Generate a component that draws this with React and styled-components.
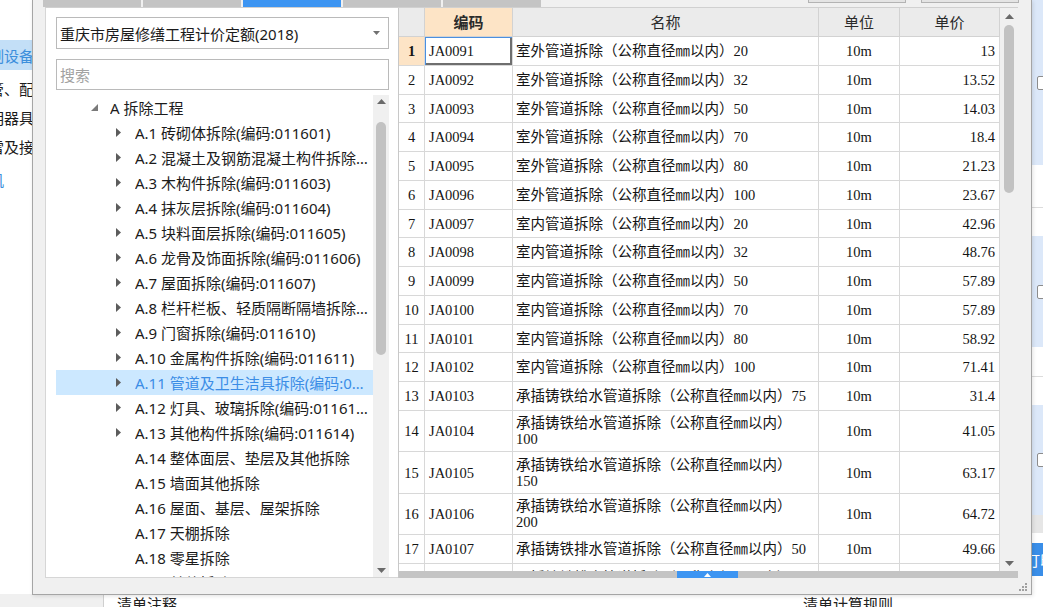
import React from "react";
import styled, { createGlobalStyle } from "styled-components";

const GlobalStyle = createGlobalStyle`
  * { box-sizing: border-box; }
  html, body {
    margin: 0;
    width: 1043px;
    height: 607px;
    overflow: hidden;
    background: #fff;
  }
  body {
    font-family: "Noto Sans", "Noto Sans CJK SC", sans-serif;
    color: #1b1b1b;
  }
`;

const Screen = styled.div`
  position: relative;
  display: flex;
  width: 1043px;
  height: 607px;
  overflow: hidden;
`;

/* ---------- app behind the dialog ---------- */

const Nav = styled.div`
  flex: none;
  width: 130px;
  margin-left: -26px;
  display: flex;
  flex-direction: column;
  border-right: 1px solid #cfcfcf;
  font-size: 15px;
`;

const NavList = styled.div`
  flex: 1;
  padding-top: 40px;
  background: #fff;
`;

const NavItem = styled.div`
  height: ${(p) => (p.$active ? 30 : 29)}px;
  margin-bottom: ${(p) => (p.$active ? 4 : 0)}px;
  margin-top: ${(p) => (p.$link ? 4 : 0)}px;
  padding-left: ${(p) => (p.$link ? 15 : 0)}px;
  display: flex;
  align-items: center;
  white-space: nowrap;
  overflow: hidden;
  background: ${(p) => (p.$active ? "#c3dff7" : "transparent")};
  color: ${(p) => (p.$active || p.$link ? "#3d8fdc" : "#1b1b1b")};
`;

const NavFoot = styled.div`
  height: 13px;
  background: #f0f0f0;
`;

const Main = styled.div`
  flex: 1;
  display: flex;
  flex-direction: column;
  justify-content: flex-end;
  background: #fff;
`;

const FieldRow = styled.div`
  height: 13px;
  display: flex;
  padding-left: 13px;
  font-size: 15px;
  line-height: 20px;
  overflow: hidden;
  color: #202020;
`;

const FieldLabel = styled.div`
  flex: none;
  width: ${(p) => (p.$w ? `${p.$w}px` : "auto")};
  white-space: nowrap;
`;

const Side = styled.div`
  flex: none;
  width: 11px;
  overflow: hidden;
  display: flex;
  flex-direction: column;
  background: #fff;
`;

const SideBlock = styled.div`
  flex: none;
  width: 200px;
  height: ${(p) => p.$h}px;
  background: ${(p) => p.$tone || "#fff"};
  border-bottom: ${(p) => (p.$line ? "1px solid #dcdcdc" : "none")};
  display: flex;
  align-items: center;
  padding-left: 5px;
`;

const Check = styled.div`
  width: 13px;
  height: 14px;
  background: #fff;
  border: 1px solid #8c8c8c;
  border-radius: 2px;
`;

const SideButton = styled.div`
  flex: none;
  width: 200px;
  height: 33px;
  background: #3a8ee8;
  color: #fff;
  font-size: 15px;
  display: flex;
  align-items: center;
  text-indent: -7px;
  overflow: hidden;
`;

/* ---------- dialog ---------- */

const Dialog = styled.div`
  position: absolute;
  left: 32px;
  top: 0;
  width: 1000px;
  height: 595px;
  display: flex;
  flex-direction: column;
  background: #f0f0f0;
  border: 1px solid #a5a5a5;
  border-top: none;
  box-shadow: 1px 1px 4px rgba(0, 0, 0, 0.12);
`;

const TabStrip = styled.div`
  flex: none;
  display: flex;
  gap: 2px;
  height: 7px;
  padding: 0 12px 0 10px;
`;

const Tab = styled.div`
  width: 98px;
  background: ${(p) => (p.$active ? "#3d95f2" : "#c4c4c4")};
`;

const TopButton = styled.div`
  width: 98px;
  height: 3px;
  margin-left: ${(p) => p.$ml}px;
  background: #e4e4e4;
  border: 1px solid #b3b3b3;
  border-top: none;
`;

const Body = styled.div`
  flex: none;
  display: flex;
  width: 973px;
  height: 571px;
  margin-left: 12px;
  background: #fff;
  border-top: 1px solid #d0d0d0;
`;

const LeftPane = styled.div`
  flex: none;
  width: 353px;
  display: flex;
  flex-direction: column;
  padding: 9px 9px 0 10px;
  border-left: 1px solid #d6d6d6;
  border-bottom: 1px solid #d6d6d6;
`;

const Combo = styled.div`
  flex: none;
  height: 32px;
  display: flex;
  align-items: center;
  justify-content: space-between;
  padding: 0 8px 0 3px;
  border: 1px solid #bababa;
  font-size: 15px;
  color: #1b1b1b;
`;

const Search = styled.div`
  flex: none;
  height: 31px;
  margin-top: 10px;
  display: flex;
  align-items: center;
  padding-left: 3px;
  border: 1px solid #bababa;
  font-size: 15px;
  color: #a2a2a2;
`;

const Tree = styled.div`
  flex: 1;
  min-height: 0;
  margin-top: 5px;
  display: flex;
`;

const TreeList = styled.div`
  flex: 1;
  min-width: 0;
  overflow: hidden;
`;

const TreeRow = styled.div`
  height: 25px;
  display: flex;
  align-items: center;
  padding-left: ${(p) => 35 + p.$level * 25}px;
  background: ${(p) => (p.$selected ? "#cce8ff" : "transparent")};
  color: ${(p) => (p.$selected ? "#3b8de6" : "#1b1b1b")};
  font-size: 15px;
`;

const Toggle = styled.div`
  flex: none;
  width: 19px;
  display: flex;
  align-items: center;
`;

const TreeLabel = styled.div`
  flex: 1;
  min-width: 0;
  padding-right: 5px;
  white-space: nowrap;
  overflow: hidden;
  text-overflow: ellipsis;
`;

const VScroll = styled.div`
  flex: none;
  width: ${(p) => p.$w}px;
  display: flex;
  flex-direction: column;
  background: #f0f0f0;
`;

const ScrollArrow = styled.div`
  flex: none;
  height: ${(p) => p.$h}px;
  display: flex;
  align-items: center;
  justify-content: center;
`;

const ScrollTrack = styled.div`
  flex: 1;
  display: flex;
  justify-content: center;
`;

const ScrollThumb = styled.div`
  width: 10px;
  border-radius: 5px;
  background: #c2c2c2;
`;

const Grid = styled.div`
  flex: none;
  width: 620px;
  display: flex;
  flex-direction: column;
  border-left: 1px solid #c8c8c8;
`;

const GridMain = styled.div`
  flex: 1;
  min-height: 0;
  display: flex;
`;

const Table = styled.div`
  width: 601px;
  overflow: hidden;
  font-family: "Liberation Serif", "Noto Sans CJK SC", serif;
  font-size: 14.5px;
  color: #141414;
`;

const Row = styled.div`
  display: grid;
  grid-template-columns: 26px 88px 306px 81px 100px;
  height: ${(p) => p.$h}px;
`;

const Cell = styled.div`
  display: flex;
  align-items: center;
  min-width: 0;
  overflow: hidden;
  white-space: nowrap;
  border-right: 1px solid #d8d8d8;
  border-bottom: 1px solid #d8d8d8;
  background: #fff;
  line-height: 16px;
`;

const HeadCell = styled(Cell)`
  justify-content: center;
  background: ${(p) => (p.$hot ? "#fde4c6" : "#ebebeb")};
  border-color: #d2d2d2;
  font-family: "Noto Sans CJK SC", sans-serif;
  font-size: 15px;
  font-weight: ${(p) => (p.$hot ? 700 : 400)};
  color: #2a2a2a;
`;

const NumCell = styled(Cell)`
  justify-content: center;
  background: ${(p) => (p.$hot ? "#fde4c6" : "#fff")};
  font-weight: ${(p) => (p.$hot ? 700 : 400)};
`;

const CodeCell = styled(Cell)`
  padding-left: 4px;
  box-shadow: ${(p) =>
    p.$focus ? "inset 1px 1px 0 #4a8fe0, inset -2px -2px 0 #6f6f6f" : "none"};
`;

const NameCell = styled(Cell)`
  flex-direction: column;
  align-items: flex-start;
  justify-content: center;
  padding-left: 3px;
`;

const UnitCell = styled(Cell)`
  justify-content: center;
`;

const PriceCell = styled(Cell)`
  justify-content: flex-end;
  padding-right: 4px;
`;

const HScroll = styled.div`
  flex: none;
  height: 7px;
  background: #c4c4c4;
  display: flex;
`;

const HThumb = styled.div`
  width: 61px;
  background: #3d95f2;
  display: flex;
  align-items: center;
  justify-content: center;
`;

const Footer = styled.div`
  flex: 1;
  display: flex;
  justify-content: flex-end;
  align-items: flex-end;
  padding: 0 4px 3px 0;
`;

/* ---------- data ---------- */

const navItems = [
  { text: "控制设备及低压电器", active: true },
  { text: "配管、配线" },
  { text: "照明器具" },
  { text: "防雷及接地装置" },
  { text: "机", link: true },
];

const treeItems = [
  { label: "A 拆除工程", level: 0, state: "open" },
  { label: "A.1 砖砌体拆除(编码:011601)", level: 1, state: "closed" },
  { label: "A.2 混凝土及钢筋混凝土构件拆除(编码:011602)", level: 1, state: "closed" },
  { label: "A.3 木构件拆除(编码:011603)", level: 1, state: "closed" },
  { label: "A.4 抹灰层拆除(编码:011604)", level: 1, state: "closed" },
  { label: "A.5 块料面层拆除(编码:011605)", level: 1, state: "closed" },
  { label: "A.6 龙骨及饰面拆除(编码:011606)", level: 1, state: "closed" },
  { label: "A.7 屋面拆除(编码:011607)", level: 1, state: "closed" },
  { label: "A.8 栏杆栏板、轻质隔断隔墙拆除(编码:011608)", level: 1, state: "closed" },
  { label: "A.9 门窗拆除(编码:011610)", level: 1, state: "closed" },
  { label: "A.10 金属构件拆除(编码:011611)", level: 1, state: "closed" },
  { label: "A.11 管道及卫生洁具拆除(编码:011612)", level: 1, state: "closed", selected: true },
  { label: "A.12 灯具、玻璃拆除(编码:011613)", level: 1, state: "closed" },
  { label: "A.13 其他构件拆除(编码:011614)", level: 1, state: "closed" },
  { label: "A.14 整体面层、垫层及其他拆除", level: 1 },
  { label: "A.15 墙面其他拆除", level: 1 },
  { label: "A.16 屋面、基层、屋架拆除", level: 1 },
  { label: "A.17 天棚拆除", level: 1 },
  { label: "A.18 零星拆除", level: 1 },
  { label: "A.19 其他拆除", level: 1 },
];

const outdoor = "室外管道拆除（公称直径㎜以内）";
const indoor = "室内管道拆除（公称直径㎜以内）";
const feed = "承插铸铁给水管道拆除（公称直径㎜以内）";
const drain = "承插铸铁排水管道拆除（公称直径㎜以内）";

const rows = [
  ["JA0091", outdoor, "20", "13", 29],
  ["JA0092", outdoor, "32", "13.52", 29],
  ["JA0093", outdoor, "50", "14.03", 28],
  ["JA0094", outdoor, "70", "18.4", 29],
  ["JA0095", outdoor, "80", "21.23", 29],
  ["JA0096", outdoor, "100", "23.67", 29],
  ["JA0097", indoor, "20", "42.96", 28],
  ["JA0098", indoor, "32", "48.76", 29],
  ["JA0099", indoor, "50", "57.89", 29],
  ["JA0100", indoor, "70", "57.89", 29],
  ["JA0101", indoor, "80", "58.92", 28],
  ["JA0102", indoor, "100", "71.41", 29],
  ["JA0103", feed, "75", "31.4", 29],
  ["JA0104", feed, "100", "41.05", 41],
  ["JA0105", feed, "150", "63.17", 42],
  ["JA0106", feed, "200", "64.72", 41],
  ["JA0107", drain, "50", "49.66", 29],
  ["JA0108", drain, "75", "58.4", 29],
];

const sideBlocks = [
  { h: 165, tone: "#dce8f9", check: true },
  { h: 43, line: true },
  { h: 28 },
  { h: 111, tone: "#dce8f9", check: true },
  { h: 30, line: true },
  { h: 28 },
  { h: 110, tone: "#dce8f9", check: true },
  { h: 18, tone: "#e6e6e6" },
  { h: 10 },
];

/* ---------- small drawings ---------- */

const ScrollGlyph = ({ up }) => (
  <svg width="9" height="5" viewBox="0 0 9 5">
    <path d={up ? "M0 5 L4.5 0 L9 5 Z" : "M0 0 L4.5 5 L9 0 Z"} fill="#6a6a6a" />
  </svg>
);

const ClosedGlyph = () => (
  <svg width="5" height="9" viewBox="0 0 5 9">
    <path d="M0 0 L5 4.5 L0 9 Z" fill="#5c5c5c" />
  </svg>
);

const OpenGlyph = () => (
  <svg width="7" height="7" viewBox="0 0 7 7">
    <path d="M7 0 L7 7 L0 7 Z" fill="#7a7a7a" />
  </svg>
);

const ComboGlyph = () => (
  <svg width="7" height="4" viewBox="0 0 7 4">
    <path d="M0 0 L3.5 4 L7 0 Z" fill="#717171" />
  </svg>
);

const Grip = () => (
  <svg width="8" height="8" viewBox="0 0 8 8" fill="#a0a0a0">
    <rect x="6" y="0" width="2" height="2" />
    <rect x="6" y="3" width="2" height="2" />
    <rect x="3" y="3" width="2" height="2" />
    <rect x="6" y="6" width="2" height="2" />
    <rect x="3" y="6" width="2" height="2" />
    <rect x="0" y="6" width="2" height="2" />
  </svg>
);

function ScrollBar({ width, arrow, top, length }) {
  return (
    <VScroll $w={width}>
      <ScrollArrow $h={arrow}>
        <ScrollGlyph up />
      </ScrollArrow>
      <ScrollTrack>
        <ScrollThumb style={{ marginTop: top, height: length }} />
      </ScrollTrack>
      <ScrollArrow $h={arrow}>
        <ScrollGlyph />
      </ScrollArrow>
    </VScroll>
  );
}

export default function App() {
  return (
    <Screen>
      <GlobalStyle />

      <Nav>
        <NavList>
          {navItems.map((item, i) => (
            <NavItem key={i} $active={item.active} $link={item.link}>
              {item.text}
            </NavItem>
          ))}
        </NavList>
        <NavFoot />
      </Nav>

      <Main>
        <FieldRow>
          <FieldLabel $w={686}>清单注释</FieldLabel>
          <FieldLabel>清单计算规则</FieldLabel>
        </FieldRow>
      </Main>

      <Side>
        {sideBlocks.map((b, i) => (
          <SideBlock key={i} $h={b.h} $tone={b.tone} $line={b.line}>
            {b.check && <Check />}
          </SideBlock>
        ))}
        <SideButton>打印</SideButton>
      </Side>

      <Dialog>
        <TabStrip>
          <Tab />
          <Tab />
          <Tab $active />
          <Tab />
          <Tab />
          <TopButton $ml={265} />
          <TopButton $ml={13} />
        </TabStrip>

        <Body>
          <LeftPane>
            <Combo>
              <span>重庆市房屋修缮工程计价定额(2018)</span>
              <ComboGlyph />
            </Combo>
            <Search>搜索</Search>
            <Tree>
              <TreeList>
                {treeItems.map((item, i) => (
                  <TreeRow key={i} $level={item.level} $selected={item.selected}>
                    <Toggle>
                      {item.state === "open" && <OpenGlyph />}
                      {item.state === "closed" && <ClosedGlyph />}
                    </Toggle>
                    <TreeLabel>{item.label}</TreeLabel>
                  </TreeRow>
                ))}
              </TreeList>
              <ScrollBar width={16} arrow={13} top={14} length={233} />
            </Tree>
          </LeftPane>

          <Grid>
            <GridMain>
              <Table>
                <Row $h={29}>
                  <HeadCell />
                  <HeadCell $hot>编码</HeadCell>
                  <HeadCell>名称</HeadCell>
                  <HeadCell>单位</HeadCell>
                  <HeadCell>单价</HeadCell>
                </Row>
                {rows.map(([code, name, size, price, h], i) => (
                  <Row key={code} $h={h}>
                    <NumCell $hot={i === 0}>{i + 1}</NumCell>
                    <CodeCell $focus={i === 0}>{code}</CodeCell>
                    <NameCell>
                      {h > 35 ? (
                        <>
                          <span>{name}</span>
                          <span>{size}</span>
                        </>
                      ) : (
                        <span>
                          {name}
                          {size}
                        </span>
                      )}
                    </NameCell>
                    <UnitCell>10m</UnitCell>
                    <PriceCell>{price}</PriceCell>
                  </Row>
                ))}
              </Table>
              <ScrollBar width={18} arrow={16} top={1} length={168} />
            </GridMain>
            <HScroll>
              <HThumb style={{ marginLeft: 278 }}>
                <svg width="7" height="4" viewBox="0 0 7 4">
                  <path d="M0 4 L3.5 0 L7 4 Z" fill="#fff" />
                </svg>
              </HThumb>
            </HScroll>
          </Grid>
        </Body>

        <Footer>
          <Grip />
        </Footer>
      </Dialog>
    </Screen>
  );
}
